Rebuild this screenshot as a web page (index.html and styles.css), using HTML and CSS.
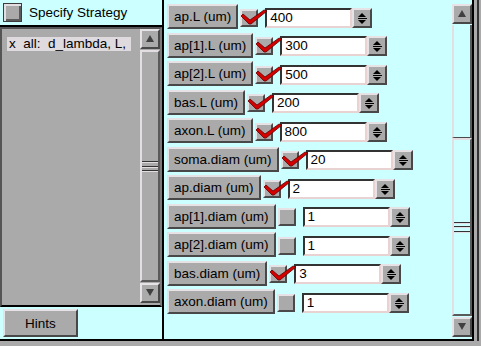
FILE: index.html
```html
<!DOCTYPE html>
<html lang="en">
<head>
    <meta charset="UTF-8">
    <title>Specify Strategy</title>
    <link rel="stylesheet" href="styles.css">
</head>
<body>
    <div class="window">
        <div class="left">
            <div class="strategy">
                <span class="toggle"></span>
                <span class="strategy-label">Specify Strategy</span>
            </div>
            <div class="list">
                <div class="list-body">
                    <div class="list-item">x  all:  d_lambda, L,</div>
                </div>
                <div class="vscroll">
                    <div class="arrow"><svg width="16" height="16"><polygon points="4,11 8,4 12,11" fill="#404040"/></svg></div>
                    <div class="trough">
                        <div class="thumb"><div class="grip"></div></div>
                    </div>
                    <div class="arrow"><svg width="16" height="16"><polygon points="4,4 12,4 8,11" fill="#404040"/></svg></div>
                </div>
            </div>
            <div class="hints-bar">
                <button class="btn hints">Hints</button>
            </div>
        </div>

        <div class="right">
            <div class="rows" id="rows"></div>
            <div class="vscroll right-scroll">
                <div class="arrow"><svg width="16" height="16"><polygon points="4,11 8,4 12,11" fill="#404040"/></svg></div>
                <div class="trough">
                    <div class="trough-space"></div>
                    <div class="thumb"><div class="grip"></div></div>
                </div>
                <div class="arrow"><svg width="16" height="16"><polygon points="4,4 12,4 8,11" fill="#404040"/></svg></div>
            </div>
        </div>
    </div>

    <script>
        const params = [
            ['ap.L (um)', true, '400'],
            ['ap[1].L (um)', true, '300'],
            ['ap[2].L (um)', true, '500'],
            ['bas.L (um)', true, '200'],
            ['axon.L (um)', true, '800'],
            ['soma.diam (um)', true, '20'],
            ['ap.diam (um)', true, '2'],
            ['ap[1].diam (um)', false, '1'],
            ['ap[2].diam (um)', false, '1'],
            ['bas.diam (um)', true, '3'],
            ['axon.diam (um)', false, '1']
        ];

        // red tick drawn over a checked box
        const tick = '<svg class="tick" width="28" height="18" viewBox="0 0 28 18">' +
            '<polygon points="1,7 3,5 10,11 24,1 27,2 11,15 9,15" fill="#d40000" stroke="#600000" stroke-width="0.8"/></svg>';

        const spin = '<svg width="16" height="16">' +
            '<polygon points="4,7 8,3 12,7" fill="#000"/>' +
            '<rect x="4" y="8" width="9" height="1" fill="#000"/>' +
            '<polygon points="4,10 12,10 8,14" fill="#000"/></svg>';

        const rows = document.getElementById('rows');
        params.forEach(([label, on, value]) => {
            const row = document.createElement('div');
            row.className = 'row';
            row.innerHTML =
                `<button class="btn">${label}</button>` +
                `<span class="check">${on ? tick : ''}</span>` +
                `<span class="field">${value}</span>` +
                `<span class="spin">${spin}</span>`;
            rows.appendChild(row);
        });
    </script>
</body>
</html>
```

FILE: styles.css
```css
body {
    margin: 0;
    background-color: #aaaaaa;
    font-family: "Liberation Sans", Arial, sans-serif;
    font-size: 13.5px;
    color: #000;
}

.window {
    display: flex;
    width: 472px;
    height: 339px;
    border-right: 2px solid #000;
    border-bottom: 2px solid #000;
    box-shadow: 3px 0 0 #aaaaaa, 5px 0 0 #333;
}

/* left column */
.left {
    width: 162px;
    border-right: 2px solid #000;
    display: flex;
    flex-direction: column;
}

.strategy {
    height: 25px;
    background-color: #ccffff;
    border-bottom: 2px solid #000;
    display: flex;
    align-items: center;
    padding-left: 3px;
}

.toggle {
    width: 19px;
    height: 19px;
    box-sizing: border-box;
    background: #aaaaaa;
    border: 1px solid #3c3c3c;
    box-shadow: inset 2px 2px 0 #e2dee2, inset -2px -2px 0 #5a5a5a;
}

.strategy-label {
    margin-left: 7px;
}

.list {
    height: 274px;
    display: flex;
    background: #aaaaaa;
    border-top: 2px solid #555;
    border-left: 2px solid #555;
    border-right: 2px solid #7a7a7a;
    padding-bottom: 2px;
    border-bottom: 2px solid #000;
}

.list-body {
    flex: 1;
    padding: 8px 0 0 5px;
}

.list-item {
    width: 122px;
    height: 14px;
    line-height: 14px;
    padding-left: 2px;
    background: #dedade;
    white-space: pre;
    overflow: hidden;
}

.hints-bar {
    height: 32px;
    box-sizing: border-box;
    background-color: #ccffff;
    padding: 2px 0 0 3px;
}

/* buttons */
.btn {
    box-sizing: border-box;
    height: 25px;
    padding: 0 5px;
    border: 2px solid;
    border-color: #e6e2e6 #484848 #484848 #e6e2e6;
    background: #aaaaaa;
    font-family: "Liberation Sans", Arial, sans-serif;
    font-size: 13.5px;
    color: #000;
    white-space: nowrap;
}

.hints {
    width: 75px;
    height: 28px;
}

/* right column */
.right {
    flex: 1;
    display: flex;
    background-color: #ccffff;
}

.rows {
    flex: 1;
    display: flex;
    flex-direction: column;
    gap: 3.5px;
    padding: 4px 0 0 3px;
}

.row {
    display: flex;
    align-items: center;
    height: 25px;
}

.check {
    position: relative;
    width: 18px;
    height: 18px;
    box-sizing: border-box;
    margin: 2px 0 0 2px;
    background: #aaaaaa;
    border: 2px solid;
    border-color: #e6e2e6 #4a4a4a #4a4a4a #e6e2e6;
}

.tick {
    position: absolute;
    left: -2px;
    top: -2px;
}

.field {
    width: 87px;
    height: 20px;
    box-sizing: border-box;
    margin: 2px 0 0 7px;
    padding-left: 3px;
    background: #fff;
    border: 2px solid;
    border-color: #333 #e8d2d2 #e8d2d2 #333;
    line-height: 16px;
}

.spin {
    width: 20px;
    height: 20px;
    box-sizing: border-box;
    margin-top: 2px;
    background: #aaaaaa;
    border: 2px solid;
    border-color: #e6e2e6 #484848 #484848 #e6e2e6;
}

.spin svg,
.arrow svg {
    display: block;
}

/* scrollbars */
.vscroll {
    width: 20px;
    display: flex;
    flex-direction: column;
}

.right-scroll {
    margin-top: 4px;
    height: 333px;
}

.arrow {
    width: 20px;
    height: 20px;
    box-sizing: border-box;
    background: #aaaaaa;
    border: 2px solid;
    border-color: #e6e2e6 #484848 #484848 #e6e2e6;
}

.trough {
    flex: 1;
    display: flex;
    flex-direction: column;
    margin: 1px 0;
}

.trough-space {
    height: 113px;
    box-sizing: border-box;
    border-left: 2px solid #e2dee2;
    border-right: 2px solid #5a5a5a;
    border-bottom: 1px solid #4a4a4a;
}

.thumb {
    flex: 1;
    box-sizing: border-box;
    display: flex;
    align-items: center;
    border: 2px solid;
    border-color: #e2dee2 #5a5a5a #5a5a5a #e2dee2;
}

.grip {
    width: 100%;
    height: 11px;
    background: repeating-linear-gradient(#333 0 1px, #e2dee2 1px 2px, transparent 2px 4.5px);
}
```
